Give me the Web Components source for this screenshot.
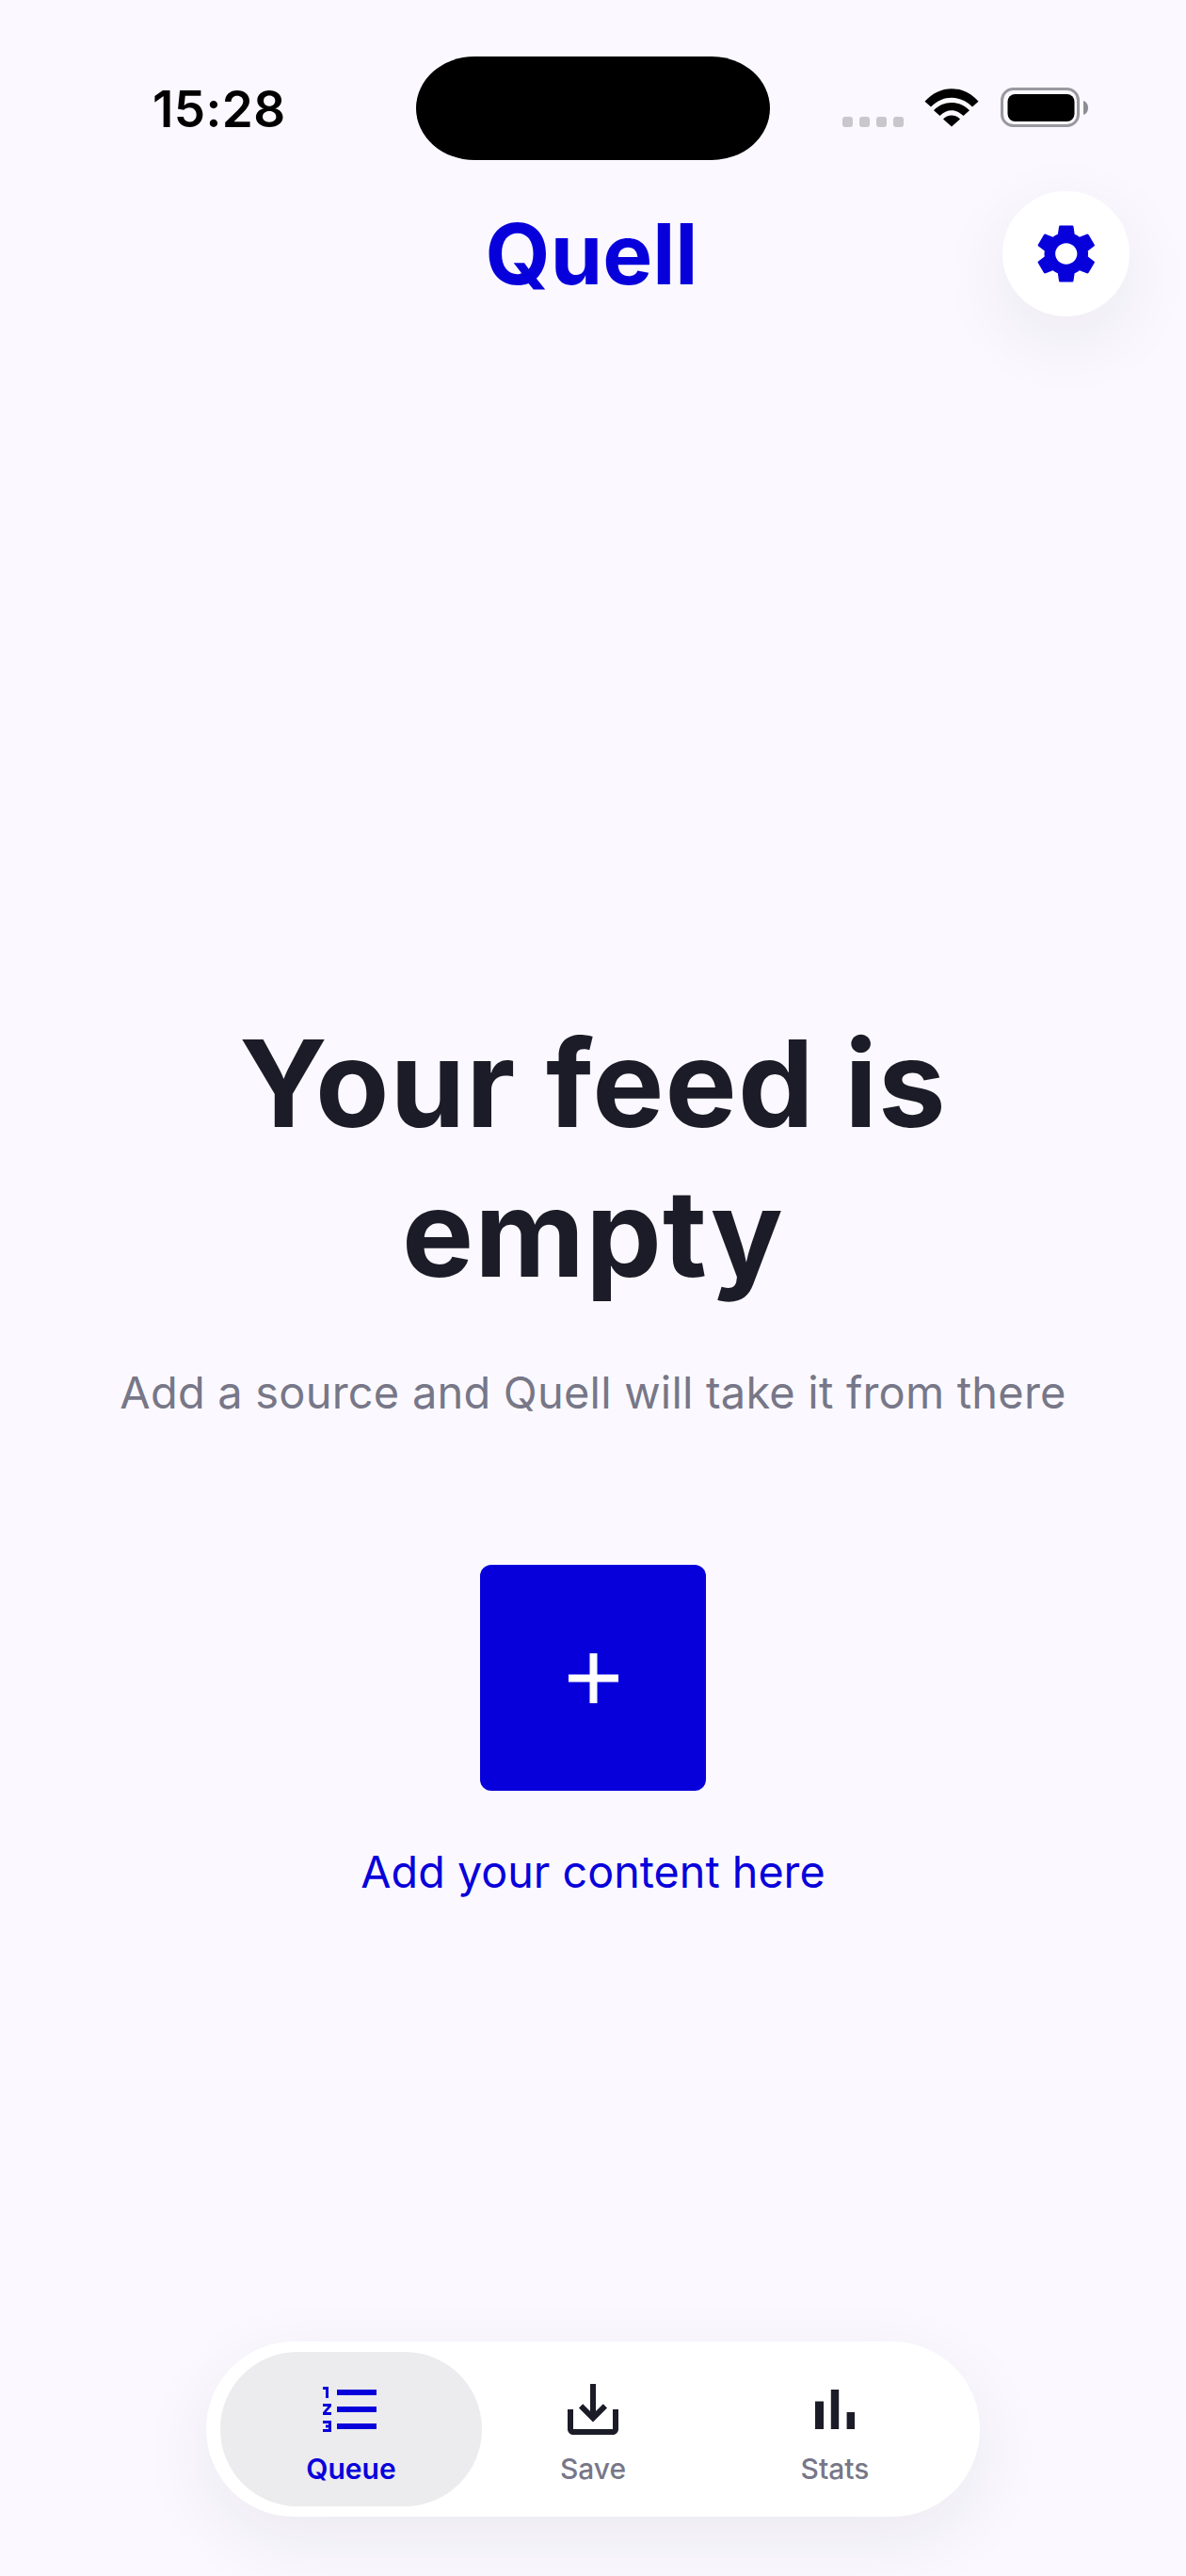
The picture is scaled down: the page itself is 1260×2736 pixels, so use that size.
<!DOCTYPE html>
<html><head><meta charset="utf-8"><style>
html,body{margin:0;padding:0;background:#fbf9ff;}
body{font-family:Inter,sans-serif;width:1260px;height:2736px;overflow:hidden;}
</style></head><body>
<app-screen>
<status-bar slot="status"></status-bar>
<app-header slot="header"></app-header>
<empty-state slot="main"></empty-state>
<tab-bar slot="nav"></tab-bar>
</app-screen>
<script>
function def(name,html){customElements.define(name,class extends HTMLElement{constructor(){super();this.attachShadow({mode:'open'}).innerHTML=html;}});}
const BLUE='#0800db',DARK='#1c1c28',GRAY='#777788';
def('app-screen',`<style>:host{display:flex;flex-direction:column;width:1260px;height:2736px;background:#fbf9ff}
.m{flex:1;display:flex;flex-direction:column;min-height:0}</style>
<slot name="status"></slot><slot name="header"></slot><div class="m"><slot name="main"></slot></div><slot name="nav"></slot>`);
def('status-bar',`<style>:host{display:block;height:203px;box-sizing:border-box;padding-top:60px}
.r{display:flex;align-items:flex-start;height:110px}
.t{width:442px;box-sizing:border-box;padding:23px 0 0 162px;font:600 53px/66px Inter,sans-serif;color:#000;letter-spacing:.4px}
.i{width:376px;height:110px;border-radius:62px/55px;background:#000}
.s{display:flex;align-items:flex-start;padding:33px 0 0 77px}
svg{display:block}</style>
<div class="r"><div class="t">15:28</div><div class="i"></div>
<div class="s">
<svg width="65" height="11" viewBox="0 0 65 11" style="margin-top:31px"><g fill="#c9c6cc"><rect x="0" y="0" width="11" height="11" rx="3"/><rect x="18" y="0" width="11" height="11" rx="3"/><rect x="36" y="0" width="11" height="11" rx="3"/><rect x="54" y="0" width="11" height="11" rx="3"/></g></svg>
<svg width="58" height="42" viewBox="0 0 58 44" preserveAspectRatio="none" style="margin-left:22px"><path d="M0.5 15.5C16 -3.5 42 -3.5 57.5 15.5L51 21.5C38 8 20 8 7 21.5Z M10 25.5C20 14 38 14 48 25.5L41.500 31.500C34 23.500 24 23.500 16.500 31.500Z M20 35C25 29.500 33 29.500 38 35L29 43.500Z" fill="#000"/></svg>
<svg width="93" height="42" viewBox="0 0 93 42" style="margin-left:23px"><rect x="1.500" y="1.500" width="81" height="39" rx="12" fill="none" stroke="#9b99a0" stroke-width="3"/><rect x="7.500" y="7" width="71" height="29" rx="8" fill="#000"/><path d="M88 14c3 1 5 3.500 5 7.500s-2 6.500-5 7.500z" fill="#8f8d94"/></svg>
</div></div>`);
def('app-header',`<style>:host{display:block;height:133px;position:relative;text-align:center}
h1{margin:0;padding-right:3px;font:700 89px/133px Inter,sans-serif;color:${BLUE}}
button{position:absolute;left:1065px;top:0;width:135px;height:133px;border:0;border-radius:50%;background:#fff;box-shadow:0 24px 80px rgba(28,28,40,.07);display:flex;align-items:center;justify-content:center;padding:0}
</style><h1>Quell</h1><button><svg width="77.500" height="75" viewBox="0 0 24 24" preserveAspectRatio="none" fill="${BLUE}"><path d="M19.14 12.94c.04-.3.06-.61.06-.94 0-.32-.02-.64-.07-.94l2.03-1.58c.18-.14.23-.41.12-.61l-1.92-3.32c-.12-.22-.37-.29-.59-.22l-2.39.96c-.5-.38-1.03-.7-1.62-.94l-.36-2.54c-.04-.24-.24-.41-.48-.41h-3.84c-.24 0-.43.17-.47.41l-.36 2.54c-.59.24-1.13.57-1.62.94l-2.39-.96c-.22-.08-.47 0-.59.22L2.74 8.87c-.12.21-.08.47.12.61l2.03 1.58c-.05.3-.09.63-.09.94s.02.64.07.94l-2.03 1.58c-.18.14-.23.41-.12.61l1.92 3.32c.12.22.37.29.59.22l2.39-.96c.5.38 1.03.7 1.62.94l.36 2.54c.05.24.24.41.48.41h3.84c.24 0 .44-.17.47-.41l.36-2.54c.59-.24 1.13-.56 1.62-.94l2.39.96c.22.08.47 0 .59-.22l1.92-3.32c.12-.22.07-.47-.12-.61l-2.01-1.58zM12 15.6c-1.98 0-3.6-1.62-3.6-3.6s1.62-3.6 3.6-3.6 3.6 1.62 3.6 3.6-1.62 3.6-3.6 3.6z"/></svg></button>`);
def('empty-state',`<style>:host{display:flex;flex-direction:column;align-items:center;padding-top:735px;text-align:center}
h2{margin:0;font:700 128px/159px Inter,sans-serif;color:${DARK};width:800px;letter-spacing:1.100px}
p{margin:57px 0 0;font:400 47px/66px Inter,sans-serif;color:${GRAY};letter-spacing:.2px}
.b{margin-top:150px;width:240px;height:240px;border:0;border-radius:12px;background:${BLUE};display:flex;align-items:center;justify-content:center;padding:0}
a{margin-top:53px;font:400 46.700px/66px Inter,sans-serif;color:${BLUE}}
</style><h2>Your feed is empty</h2><p>Add a source and Quell will take it from there</p>
<button class="b"><svg width="53" height="53" viewBox="0 0 53 53"><path d="M22.500 0h8v22.500H53v8H30.500V53h-8V30.500H0v-8h22.500z" fill="#fff"/></svg></button>
<a>Add your content here</a>`);
def('tab-item',`<style>:host{display:flex;flex-direction:column;align-items:center;box-sizing:border-box;padding-top:25px;height:164px;border-radius:82px;font:500 30px/36px Inter,sans-serif;color:${GRAY};width:236px}
:host([active]){background:#ecebee;color:${BLUE};font-weight:600;width:278px}
:host([wide]){width:278px}
::slotted(svg){display:block;fill:${DARK}}
:host([active]) ::slotted(svg){fill:${BLUE}}
span{margin-top:9px}</style><slot name="icon"></slot><span><slot></slot></span>`);
def('tab-bar',`<style>:host{display:flex;position:absolute;left:219px;top:2487px;width:822px;height:186px;box-sizing:border-box;padding:11px 15px;background:#fff;border-radius:93px;box-shadow:0 24px 80px rgba(28,28,40,.07)}</style>
<tab-item active><svg slot="icon" width="72" height="72" viewBox="0 0 24 24"><path d="M2 17h2v.5H3v1h1v.5H2v1h3v-4H2v1zm1-9h1V4H2v1h1v3zm-1 3h1.800L2 13.100v.9h3v-1H3.200L5 10.900V10H2v1zm5-6v2h14V5H7zm0 14h14v-2H7v2zm0-6h14v-2H7v2z"/></svg>Queue</tab-item>
<tab-item><svg slot="icon" width="72" height="72" viewBox="0 0 24 24"><path d="M19 12v7H5v-7H3v7c0 1.100.9 2 2 2h14c1.100 0 2-.9 2-2v-7h-2zm-6 .67l2.590-2.580L17 11.500l-5 5-5-5 1.410-1.410L11 12.670V3h2v9.670z"/></svg>Save</tab-item>
<tab-item wide><svg slot="icon" width="72" height="72" viewBox="0 0 24 24"><path d="M5 9.200h3V19H5zM10.600 5h2.800v14h-2.800zm5.600 8H19v6h-2.800z"/></svg>Stats</tab-item>`);
</script></body></html>
